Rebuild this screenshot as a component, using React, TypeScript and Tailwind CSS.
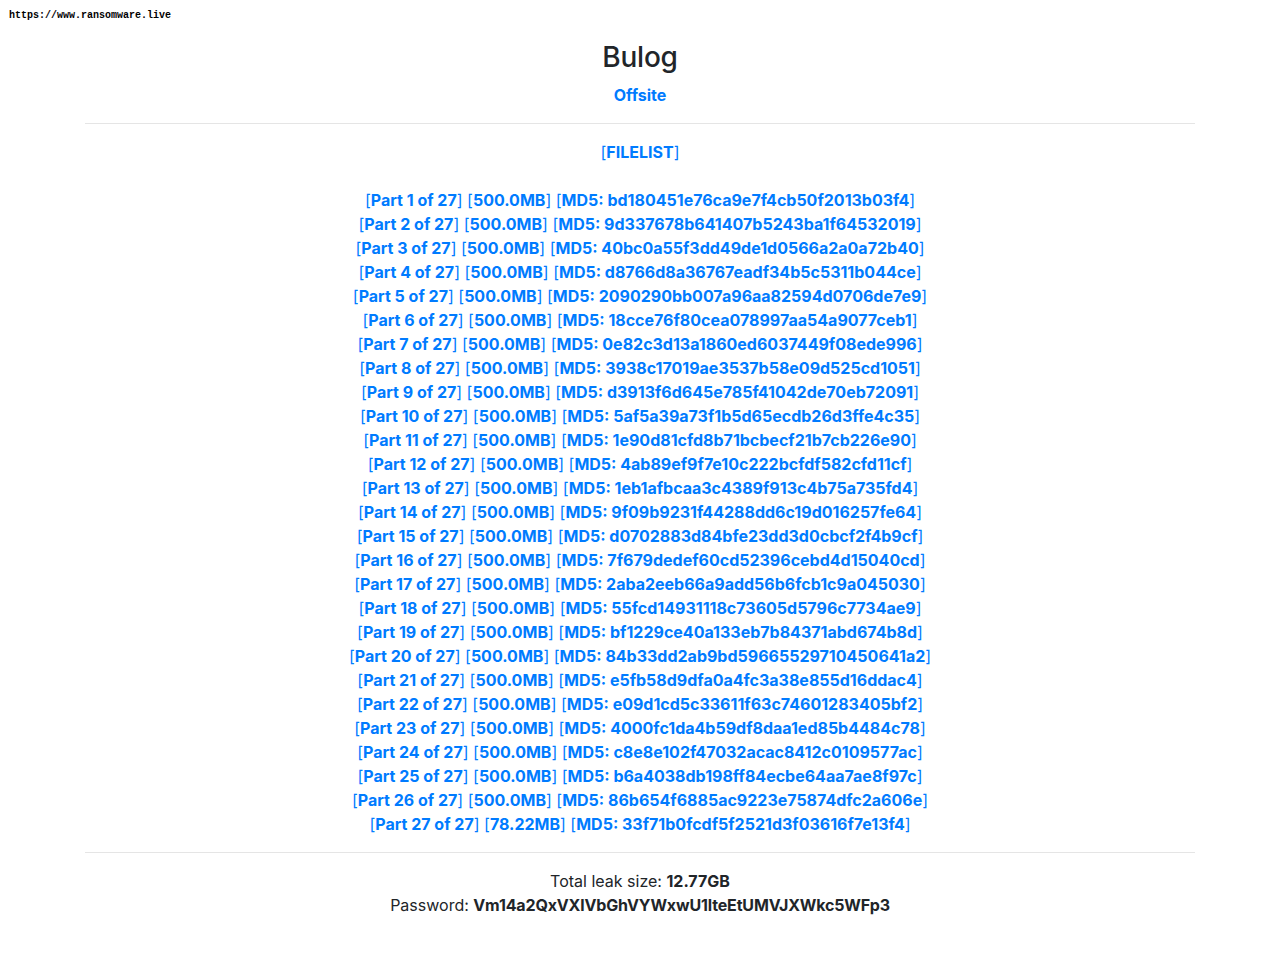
const PARTS: [string, string][] = [
  ["500.0MB", "bd180451e76ca9e7f4cb50f2013b03f4"],
  ["500.0MB", "9d337678b641407b5243ba1f64532019"],
  ["500.0MB", "40bc0a55f3dd49de1d0566a2a0a72b40"],
  ["500.0MB", "d8766d8a36767eadf34b5c5311b044ce"],
  ["500.0MB", "2090290bb007a96aa82594d0706de7e9"],
  ["500.0MB", "18cce76f80cea078997aa54a9077ceb1"],
  ["500.0MB", "0e82c3d13a1860ed6037449f08ede996"],
  ["500.0MB", "3938c17019ae3537b58e09d525cd1051"],
  ["500.0MB", "d3913f6d645e785f41042de70eb72091"],
  ["500.0MB", "5af5a39a73f1b5d65ecdb26d3ffe4c35"],
  ["500.0MB", "1e90d81cfd8b71bcbecf21b7cb226e90"],
  ["500.0MB", "4ab89ef9f7e10c222bcfdf582cfd11cf"],
  ["500.0MB", "1eb1afbcaa3c4389f913c4b75a735fd4"],
  ["500.0MB", "9f09b9231f44288dd6c19d016257fe64"],
  ["500.0MB", "d0702883d84bfe23dd3d0cbcf2f4b9cf"],
  ["500.0MB", "7f679dedef60cd52396cebd4d15040cd"],
  ["500.0MB", "2aba2eeb66a9add56b6fcb1c9a045030"],
  ["500.0MB", "55fcd14931118c73605d5796c7734ae9"],
  ["500.0MB", "bf1229ce40a133eb7b84371abd674b8d"],
  ["500.0MB", "84b33dd2ab9bd59665529710450641a2"],
  ["500.0MB", "e5fb58d9dfa0a4fc3a38e855d16ddac4"],
  ["500.0MB", "e09d1cd5c33611f63c74601283405bf2"],
  ["500.0MB", "4000fc1da4b59df8daa1ed85b4484c78"],
  ["500.0MB", "c8e8e102f47032acac8412c0109577ac"],
  ["500.0MB", "b6a4038db198ff84ecbe64aa7ae8f97c"],
  ["500.0MB", "86b654f6885ac9223e75874dfc2a606e"],
  ["78.22MB", "33f71b0fcdf5f2521d3f03616f7e13f4"],
];

export default function App() {
  return (
    <div className="min-h-[964px] bg-white text-[16px] leading-[24px] text-[#212529] [font-family:Inter,'Liberation_Sans',sans-serif]">
      {/* source stamp */}
      <div className="h-[41px] pl-[9px] pt-[10px] text-[10px] leading-[12px] font-bold text-black [font-family:'Liberation_Mono',monospace]">
        https://www.ransomware.live
      </div>

      <div className="mx-auto w-[1110px] text-center">
        <h3 className="mb-2 text-[28px] leading-[33.6px] font-medium tracking-[-0.2px]">Bulog</h3>
        <a href="#" className="font-bold text-[#007bff]">Offsite</a>
        <hr className="my-4 border-t border-black/10" />

        <a href="#" className="text-[#007bff]">
          [<b>FILELIST</b>]
        </a>
        <div className="h-6" />

        <div className="text-[#007bff]">
          {PARTS.map(([size, md5], i) => (
            <div key={md5}>
              [<b>Part {i + 1} of 27</b>] [<b>{size}</b>] [<b>MD5: {md5}</b>]
            </div>
          ))}
        </div>

        <hr className="my-4 border-t border-black/10" />
        <p>
          Total leak size: <b>12.77GB</b>
        </p>
        <p>
          Password: <b className="tracking-[-0.15px]">Vm14a2QxVXlVbGhVYWxwU1lteEtUMVJXWkc5WFp3</b>
        </p>
      </div>
    </div>
  );
}
